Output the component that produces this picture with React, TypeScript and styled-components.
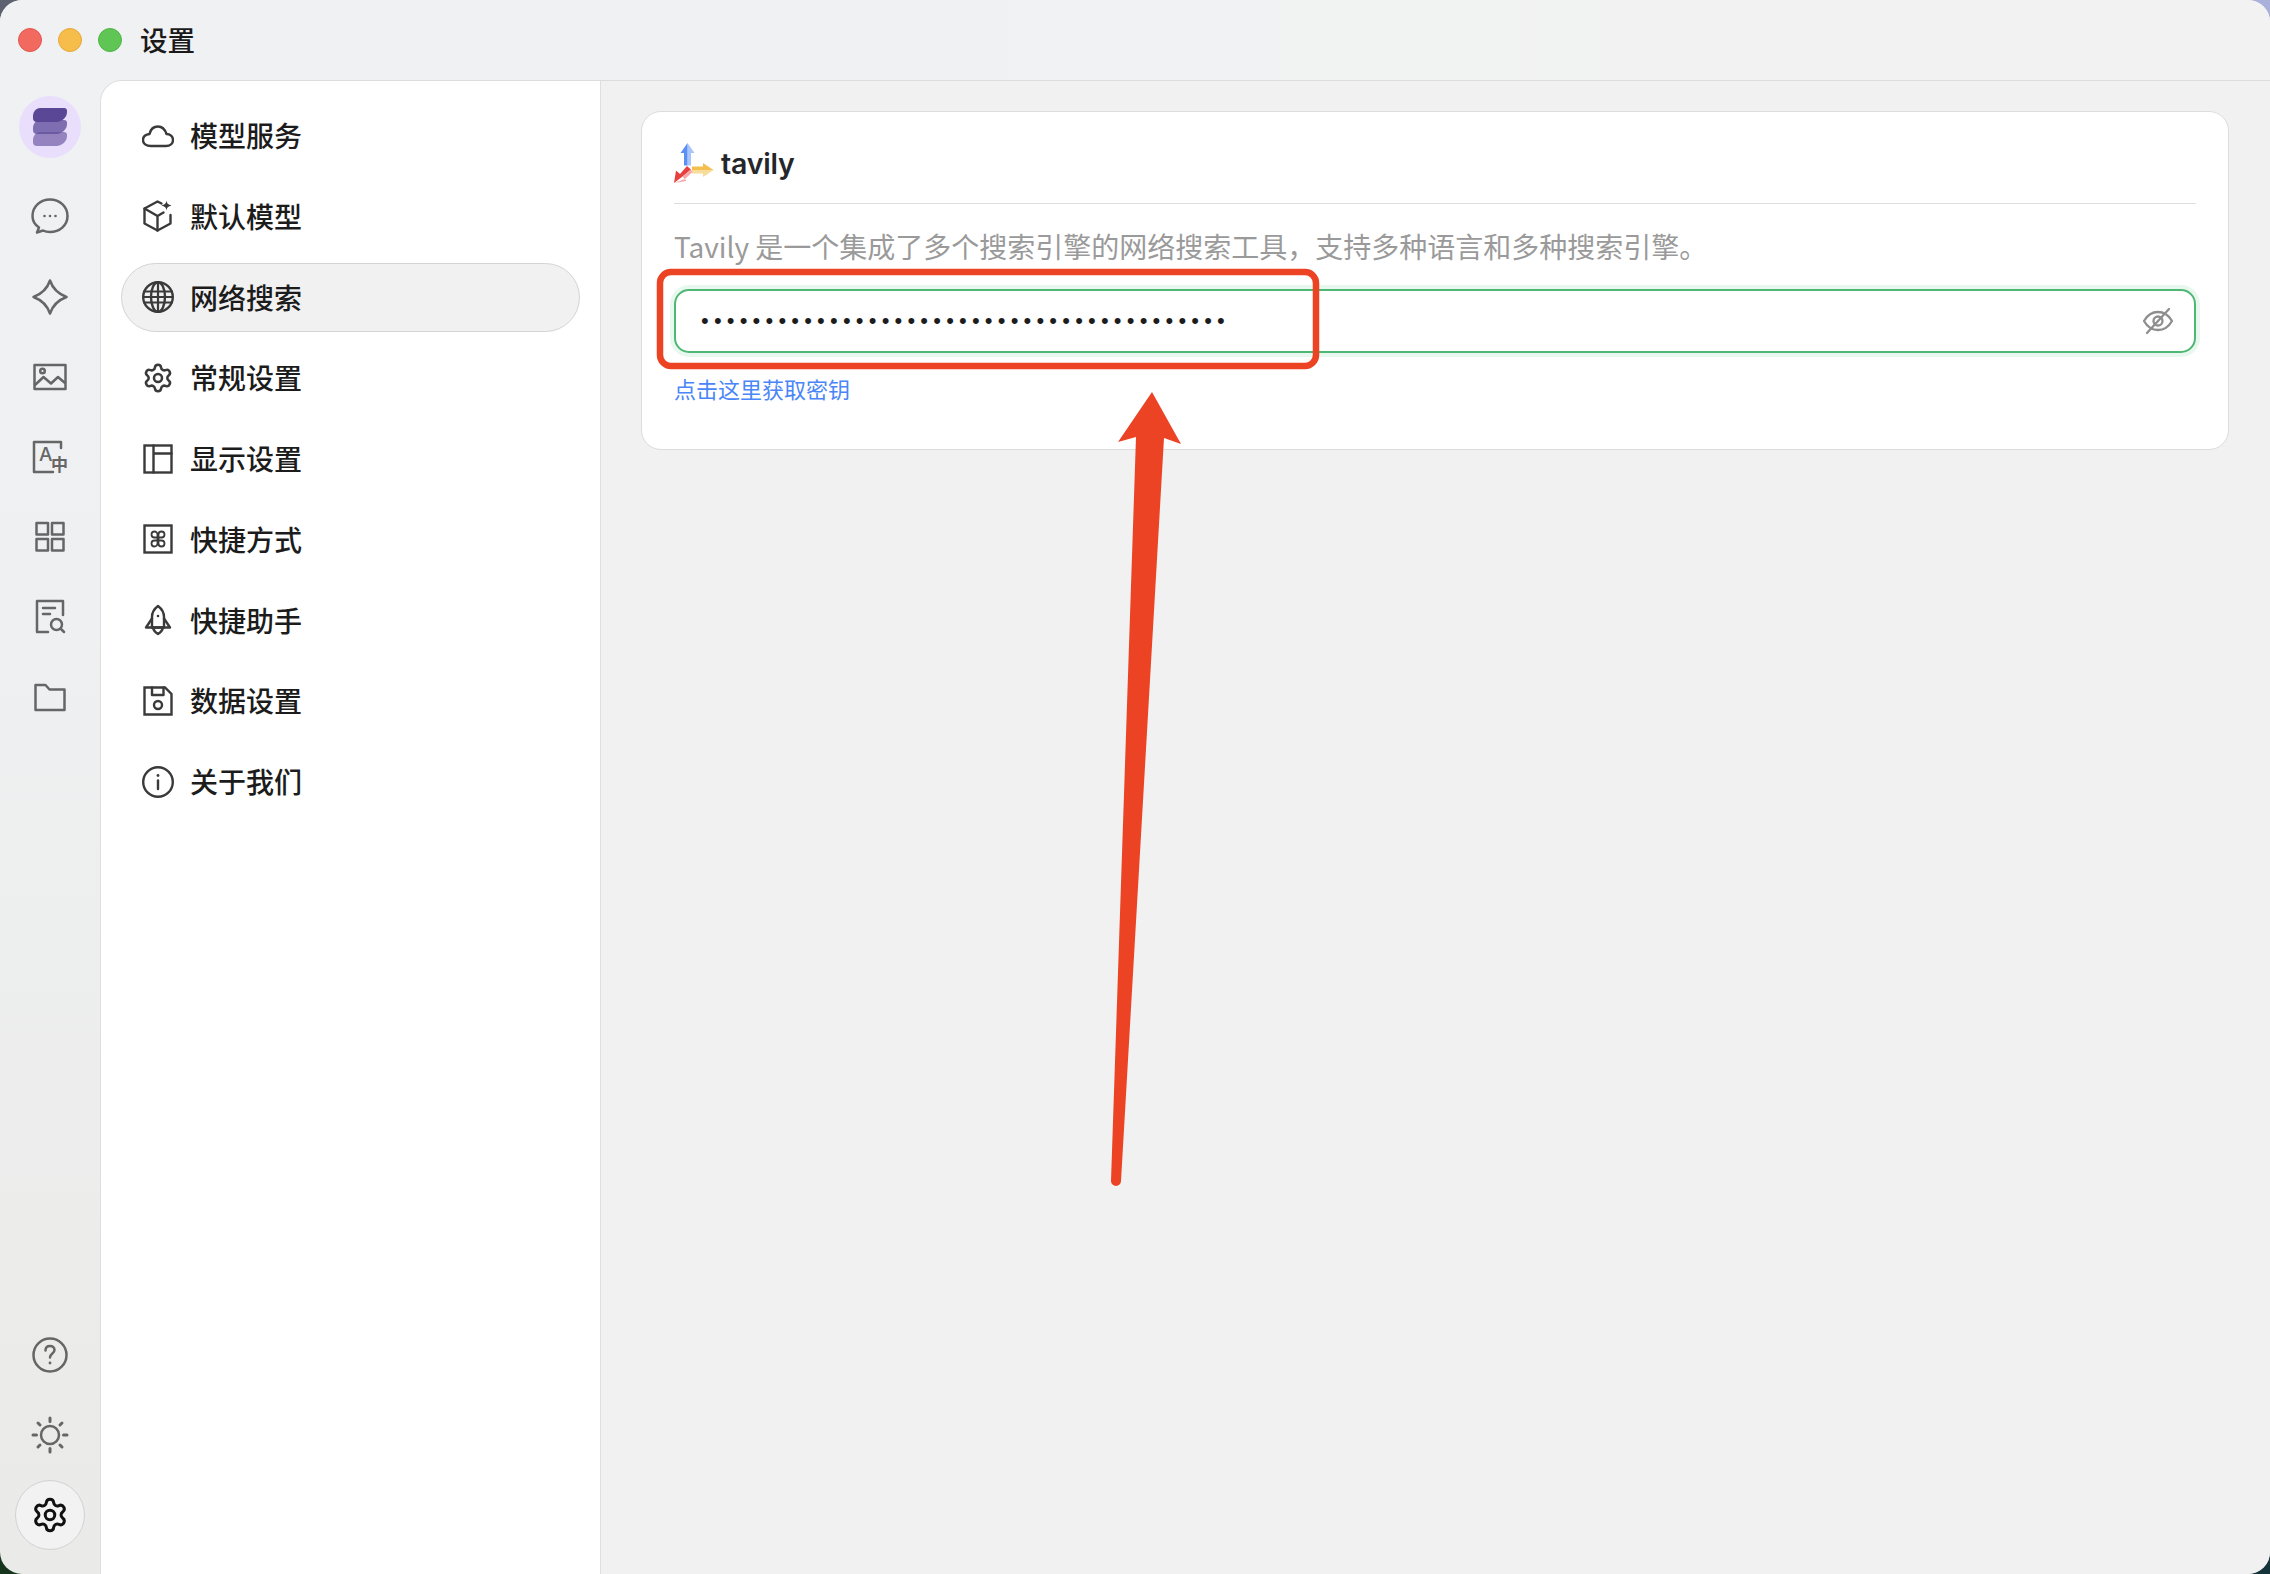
import styled, { createGlobalStyle } from "styled-components";
import { Settings } from "lucide-react";
import type { ReactNode } from "react";

const GlobalStyle = createGlobalStyle`
  html, body {
    margin: 0;
    padding: 0;
    background:
      linear-gradient(90deg, #5d6170 0 50%, #a9b0da 50% 100%) top / 100% 50% no-repeat,
      linear-gradient(90deg, #16351c 0 50%, #15333a 50% 100%) bottom / 100% 50% no-repeat;
  }
  * { box-sizing: border-box; }
`;

const FONT = `"Noto Sans CJK SC", "Inter", sans-serif`;

const Window = styled.div`
  position: relative;
  width: 2270px;
  height: 1574px;
  display: flex;
  flex-direction: column;
  overflow: hidden;
  border-radius: 22px;
  background: linear-gradient(180deg, #f0f1f3 0%, #eff0f1 40%, #eaeae8 100%);
  font-family: ${FONT};
`;

const TitleBar = styled.header`
  height: 80px;
  flex: none;
  display: flex;
  align-items: center;
  padding-left: 18px;
  background: linear-gradient(90deg, #f0f1f3 0%, #f2f2f2 100%);
`;

const Light = styled.span<{ $color: string; $edge: string }>`
  width: 24px;
  height: 24px;
  border-radius: 50%;
  margin-right: 16px;
  background: ${(p) => p.$color};
  border: 1px solid ${(p) => p.$edge};
`;

const Title = styled.h1`
  margin: -2px 0 0 2px;
  font-size: 27.5px;
  line-height: 36px;
  font-weight: 500;
  color: #1a1a1a;
`;

const Body = styled.div`
  flex: 1;
  min-height: 0;
  display: flex;
`;

const Rail = styled.nav`
  width: 100px;
  flex: none;
  display: flex;
  flex-direction: column;
  align-items: center;
  padding: 16px 0 19px;
`;

const LogoBadge = styled.div`
  width: 62px;
  height: 62px;
  flex: none;
  margin-bottom: 19px;
  border-radius: 50%;
  background: #e9dffc;
  display: flex;
  align-items: center;
  justify-content: center;
`;

const RailItem = styled.div<{ $pushed?: boolean; $active?: boolean }>`
  width: 100%;
  height: 80px;
  flex: none;
  display: flex;
  align-items: center;
  justify-content: center;
  color: ${(p) => (p.$active ? "#111111" : "#666666")};
  margin-top: ${(p) => (p.$pushed ? "auto" : "0")};
`;

const RailButton = styled.div`
  width: 70px;
  height: 70px;
  border-radius: 50%;
  background: #f2f2f3;
  border: 1.5px solid #d2d2d2;
  display: flex;
  align-items: center;
  justify-content: center;
`;

const Main = styled.main`
  flex: 1;
  min-width: 0;
  display: flex;
  border-top-left-radius: 22px;
  border-top: 1.5px solid #dcdcdc;
  border-left: 1.5px solid #dedede;
  overflow: hidden;
  background: #f1f1f1;
`;

const Menu = styled.aside`
  width: 500px;
  flex: none;
  background: #ffffff;
  border-right: 1.5px solid #dfdfdf;
  padding: 20px 20px 0 20px;
  display: flex;
  flex-direction: column;
  gap: 11.75px;
`;

const MenuItem = styled.div<{ $active?: boolean }>`
  height: 69px;
  flex: none;
  display: flex;
  align-items: center;
  gap: 16px;
  padding-left: 20px;
  border-radius: 35px;
  border: 1.5px solid ${(p) => (p.$active ? "#d4d4d4" : "transparent")};
  background: ${(p) => (p.$active ? "#f1f1f1" : "transparent")};
  color: #3a3a3a;
`;

const MenuIcon = styled.span`
  width: 32px;
  height: 32px;
  flex: none;
  display: flex;
  align-items: center;
  justify-content: center;
`;

const MenuLabel = styled.span`
  font-size: 28px;
  line-height: 36px;
  font-weight: 500;
  margin-bottom: 1px;
  color: #1c1c1c;
`;

const Content = styled.section`
  flex: 1;
  min-width: 0;
  padding: 30px 41px 0 40px;
`;

const Card = styled.div`
  height: 339px;
  background: #ffffff;
  border: 1.5px solid #dcdcdc;
  border-radius: 20px;
  padding: 0 32px;
  display: flex;
  flex-direction: column;
`;

const Brand = styled.div`
  height: 92px;
  flex: none;
  display: flex;
  align-items: flex-start;
  gap: 7px;
  padding-top: 31px;
  border-bottom: 1.5px solid #dedede;
`;

const BrandName = styled.span`
  font-family: "Inter", "Noto Sans", sans-serif;
  font-size: 28.5px;
  line-height: 36px;
  font-weight: 600;
  letter-spacing: -0.2px;
  color: #25262b;
  margin-top: 3px;
`;

const Description = styled.p`
  margin: 23px 0 0;
  font-size: 28px;
  line-height: 38px;
  font-weight: 400;
  white-space: nowrap;
  color: #9a9a9a;
`;

const KeyField = styled.div`
  height: 64px;
  flex: none;
  margin-top: 24px;
  display: flex;
  align-items: center;
  padding: 0 20px 0 25px;
  background: #ffffff;
  border: 2.5px solid #4fb774;
  border-radius: 15px;
  box-shadow: 0 0 0 4px #e9f8ee;
  color: #8e8e8e;
`;

const KeyInput = styled.input`
  flex: 1;
  min-width: 0;
  border: 0;
  outline: 0;
  padding: 0;
  background: transparent;
  font-family: "Liberation Sans", sans-serif;
  font-size: 22px;
  letter-spacing: 5.2px;
  color: #1c1c1c;
`;

const KeyLink = styled.a`
  margin-top: 18.5px;
  font-size: 22px;
  line-height: 32px;
  color: #4a86f7;
  text-decoration: none;
`;

const Markup = styled.svg`
  position: absolute;
  left: 0;
  top: 0;
  pointer-events: none;
`;

type IconProps = { size?: number; stroke?: number; children: ReactNode };

const Icon = ({ size = 40, stroke = 2.5, children }: IconProps) => (
  <svg
    width={size}
    height={size}
    viewBox={`0 0 ${size} ${size}`}
    fill="none"
    stroke="currentColor"
    strokeWidth={stroke}
    strokeLinecap="round"
    strokeLinejoin="round"
  >
    {children}
  </svg>
);

const railTop = [
  <>
    <path d="M9 30.500C4.500 27.500 2.500 23.500 2.500 19C2.500 9.500 10.500 2.500 20 2.500S37.500 9.500 37.500 19S29.500 35 20 35C17.500 35 15 34.500 13 33.500L7 35.500Z" />
    <g fill="currentColor" stroke="none">
      <circle cx="14.500" cy="19" r="1.300" />
      <circle cx="20" cy="19" r="1.300" />
      <circle cx="25.500" cy="19" r="1.300" />
    </g>
  </>,
  <path d="M20 3.500C22.500 11 28.500 17 36.500 20C28.500 23 22.500 29 20 36.500C17.500 29 11.500 23 3.500 20C11.500 17 17.500 11 20 3.500Z" />,
  <>
    <rect x="4.500" y="8" width="31" height="24" />
    <circle cx="12.500" cy="14" r="2.300" />
    <path d="M5 28L13.500 20L21 26.500L28 20L35 26" />
  </>,
  <>
    <path d="M31 11V5H4V35H23" />
    <text x="9" y="24" fontSize="19" fontFamily="Inter, sans-serif" fontWeight="500" fill="currentColor" stroke="none">
      A
    </text>
    <text x="21" y="34" fontSize="17" fontFamily="Noto Sans CJK SC, sans-serif" fontWeight="700" fill="currentColor" stroke="none">
      中
    </text>
  </>,
  <>
    <rect x="6.500" y="6" width="11.500" height="11.500" />
    <rect x="22" y="6" width="11.500" height="11.500" />
    <rect x="6.500" y="22" width="11.500" height="11.500" />
    <rect x="22" y="22" width="11.500" height="11.500" />
  </>,
  <>
    <path d="M33 18V4H7V35H18" />
    <path d="M13 11H25M13 17H20" />
    <circle cx="26.500" cy="27.500" r="5.500" />
    <path d="M31 32L34 35" />
  </>,
  <path d="M5.500 8H15.500L19.500 12.500H34.500V33H5.500Z" />,
];

const menu: { label: string; active?: boolean; icon: ReactNode }[] = [
  {
    label: "模型服务",
    icon: <path d="M9 26H24C28 26 31 23.500 31 20C31 16.500 28 14 24.500 14C23 9.500 20 6.500 16 6.500C11.500 6.500 8.500 9.500 7.500 14C3.500 14.500 1 17 1 20C1 23.500 4 26 9 26Z" />,
  },
  {
    label: "默认模型",
    icon: (
      <>
        <path d="M19.500 3.500L15.500 1.500L2.500 8.500V23.500L15.500 30.500L28.500 23.500V15" />
        <path d="M2.500 8.500L15.500 16V30.500M15.500 16L21.500 12.500" />
        <path d="M24.500 0.500C25 3.500 26 4.500 29.500 5.500C26 6.500 25 7.500 24.500 10.500C24 7.500 23 6.500 19.500 5.500C23 4.500 24 3.500 24.500 0.500Z" fill="currentColor" stroke="none" />
      </>
    ),
  },
  {
    label: "网络搜索",
    active: true,
    icon: (
      <>
        <circle cx="16" cy="16" r="14.800" />
        <ellipse cx="16" cy="16" rx="7" ry="14.800" />
        <path d="M16 1.500V30.500M2 10.500H30M2 21.500H30M1.500 16H30.500" strokeWidth="2.200" />
      </>
    ),
  },
  {
    label: "常规设置",
    icon: <Settings size={34} strokeWidth={1.900} />,
  },
  {
    label: "显示设置",
    icon: (
      <>
        <rect x="2.500" y="2.500" width="27" height="27" strokeLinejoin="miter" />
        <path d="M11.500 2.500V29.500M11.500 10.500H29.500" />
      </>
    ),
  },
  {
    label: "快捷方式",
    icon: (
      <>
        <rect x="2.500" y="2.500" width="27" height="27" strokeLinejoin="miter" />
        <path d="M19.500 8.500a3 3 0 0 0-3 3v9a3 3 0 1 0 3-3h-7a3 3 0 1 0 3 3v-9a3 3 0 1 0-3 3h7a3 3 0 0 0 0-6Z" strokeWidth="1.800" />
      </>
    ),
  },
  {
    label: "快捷助手",
    icon: (
      <>
        <path d="M16 2C20 5 22 9 22 13V23.500H10V13C10 9 12 5 16 2Z" />
        <path d="M10 14.500L4 23.500H28L22 14.500" />
        <path d="M11 23.500C11.500 26.500 13.500 28.500 16 30C18.500 28.500 20.500 26.500 21 23.500" />
        <circle cx="16" cy="12" r="1.300" fill="currentColor" stroke="none" />
      </>
    ),
  },
  {
    label: "数据设置",
    icon: (
      <>
        <path d="M2.500 2.500H23L29.500 9V29.500H2.500Z" strokeLinejoin="miter" />
        <path d="M10 2.500V10H21.500V2.500" />
        <circle cx="16" cy="20" r="4" />
      </>
    ),
  },
  {
    label: "关于我们",
    icon: (
      <>
        <circle cx="16" cy="16" r="14.800" />
        <path d="M16 14.500V23" />
        <circle cx="16" cy="9.500" r="1.400" fill="currentColor" stroke="none" />
      </>
    ),
  },
];

const LayersLogo = () => (
  <svg width="36" height="38" viewBox="0 0 36 38">
    <path d="M8 24H32a3 3 0 0 1 3 3v1c0 5-4 9-10 10H5a4 4 0 0 1-4-4V32C1 28 4 24 8 24Z" fill="#9583c0" />
    <path d="M8 12H32a3 3 0 0 1 3 3v1c0 5-4 9-10 10H5a4 4 0 0 1-4-4V20C1 16 4 12 8 12Z" fill="#5f4d9b" opacity="0.78" />
    <path d="M8 0H32a3 3 0 0 1 3 3v1c0 5-4 9-10 10H5a4 4 0 0 1-4-4V8C1 4 4 0 8 0Z" fill="#5a4796" />
  </svg>
);

const TavilyMark = () => (
  <svg width="40" height="41" viewBox="0 0 40 41">
    <path d="M13.500 0L20.500 10H17V22.500H13.500Z" fill="#a9c5fb" />
    <path d="M13.500 0L6.500 10H10V22.500H13.500Z" fill="#5b8ff6" />
    <path d="M39.500 27L29 20V23.500H18V27Z" fill="#f3bf4e" />
    <path d="M39.500 27L29 34V30.500H18V27Z" fill="#f8dc9c" />
    <path d="M0 40L2 27.500L6 31L13 23L17 26.500L8.500 33.500Z" fill="#e8403f" />
    <path d="M0 40L12.500 38L8.500 33.500L17 26.500L18.500 29L11 36Z" fill="#f6a9a9" />
  </svg>
);

const EyeOff = () => (
  <Icon size={32} stroke={2.300}>
    <path d="M2 16C6 9 10 7 16 7S26 9 30 16C26 23 22 25 16 25S6 23 2 16Z" />
    <circle cx="16" cy="16" r="4.500" />
    <path d="M5 28L27 4" />
  </Icon>
);

const App = () => (
  <Window>
    <GlobalStyle />
    <TitleBar>
      <Light $color="#f1695f" $edge="#e0584e" />
      <Light $color="#f7bd4b" $edge="#e4a93a" />
      <Light $color="#5fc655" $edge="#50b548" />
      <Title>设置</Title>
    </TitleBar>
    <Body>
      <Rail>
        <LogoBadge>
          <LayersLogo />
        </LogoBadge>
        {railTop.map((icon, i) => (
          <RailItem key={i}>
            <Icon>{icon}</Icon>
          </RailItem>
        ))}
        <RailItem $pushed>
          <Icon>
            <circle cx="20" cy="20" r="16.500" />
            <path d="M15.500 15.500C15.500 12.500 17.500 11 20 11C22.500 11 24.500 12.500 24.500 15C24.500 18.500 20 18.500 20 22.500" />
            <circle cx="20" cy="28" r="1.400" fill="currentColor" stroke="none" />
          </Icon>
        </RailItem>
        <RailItem>
          <Icon>
            <circle cx="20" cy="20" r="9" />
            <path d="M20 3V6.500M20 33.500V37M3 20H6.500M33.500 20H37M8 8L10 10M30 30L32 32M8 32L10 30M30 10L32 8" strokeWidth="3" />
          </Icon>
        </RailItem>
        <RailItem $active>
          <RailButton>
            <Settings size={38} strokeWidth={1.900} />
          </RailButton>
        </RailItem>
      </Rail>
      <Main>
        <Menu>
          {menu.map((item) => (
            <MenuItem key={item.label} $active={item.active}>
              <MenuIcon>
                {item.label === "常规设置" ? item.icon : <Icon size={32} stroke={2.400}>{item.icon}</Icon>}
              </MenuIcon>
              <MenuLabel>{item.label}</MenuLabel>
            </MenuItem>
          ))}
        </Menu>
        <Content>
          <Card>
            <Brand>
              <TavilyMark />
              <BrandName>tavily</BrandName>
            </Brand>
            <Description>Tavily 是一个集成了多个搜索引擎的网络搜索工具，支持多种语言和多种搜索引擎。</Description>
            <KeyField>
              <KeyInput type="password" readOnly value="tvly-abcdefghijklmnopqrstuvwxyz0123456789" />
              <EyeOff />
            </KeyField>
            <KeyLink href="#">点击这里获取密钥</KeyLink>
          </Card>
        </Content>
      </Main>
    </Body>
    <Markup width="2270" height="1574" viewBox="0 0 2270 1574">
      <rect x="660" y="272" width="656" height="94" rx="11" fill="none" stroke="#ec4325" strokeWidth="6.500" />
      <path d="M1152 392L1181 444L1164 438L1121 1181a5 5 0 0 1-10 0L1136 437L1118 442Z" fill="#ec4325" />
    </Markup>
  </Window>
);

export default App;
